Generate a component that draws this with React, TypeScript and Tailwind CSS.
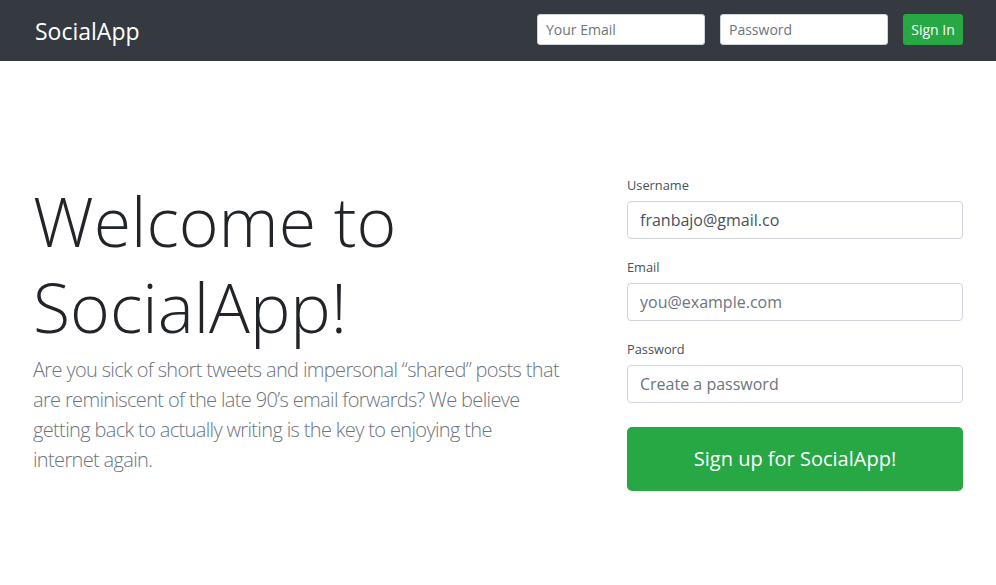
export default function App() {
  return (
    <div className="min-h-[585px] bg-white font-['Open_Sans',sans-serif] text-[#212529]">
      {/* Top navbar */}
      <header className="h-[61px] bg-[#343a40]">
        <div className="mx-auto flex h-full w-[930px] items-center justify-between">
          <a href="#" className="ml-[2px] text-[23px] leading-[30px] text-white">
            SocialApp
          </a>
          <form className="-mt-[2px] flex items-center gap-[15px]">
            <input
              type="text"
              placeholder="Your Email"
              className="h-[31px] w-[168px] rounded-[3px] border border-[#ced4da] bg-white px-2 text-[14px] text-[#495057] placeholder:text-[#6c757d]"
            />
            <input
              type="password"
              placeholder="Password"
              className="h-[31px] w-[168px] rounded-[3px] border border-[#ced4da] bg-white px-2 text-[14px] text-[#495057] placeholder:text-[#6c757d]"
            />
            <button className="h-[31px] w-[60px] rounded-[3px] bg-[#28a745] text-[14px] text-white">
              Sign In
            </button>
          </form>
        </div>
      </header>

      {/* Hero + sign up */}
      <main className="mx-auto flex w-[930px] items-start pt-[112px]">
        <div className="mt-[5px] w-[560px]">
          <h1 className="text-[68px] font-light leading-[86px]">
            Welcome to SocialApp!
          </h1>
          <p className="mt-[5px] text-[20px] font-light leading-[30px] tracking-[-0.65px] text-[#6c757d]">
            Are you sick of short tweets and impersonal “shared” posts that
            <br />
            are reminiscent of the late 90’s email forwards? We believe
            <br />
            getting back to actually writing is the key to enjoying the
            <br />
            internet again.
          </p>
        </div>

        <form className="ml-auto w-[336px]">
          <div className="mb-4">
            <label className="mb-[6px] block pt-[2px] text-[12.8px] leading-[20px] text-[#495057]">Username</label>
            <input
              type="text"
              defaultValue="franbajo@gmail.co"
              className="h-[38px] w-full rounded border border-[#ced4da] px-3 text-[16px] text-[#495057]"
            />
          </div>
          <div className="mb-4">
            <label className="mb-[6px] block pt-[2px] text-[12.8px] leading-[20px] text-[#495057]">Email</label>
            <input
              type="text"
              placeholder="you@example.com"
              className="h-[38px] w-full rounded border border-[#ced4da] px-3 text-[16px] text-[#495057] placeholder:text-[#6c757d]"
            />
          </div>
          <div className="mb-6">
            <label className="mb-[6px] block pt-[2px] text-[12.8px] leading-[20px] text-[#495057]">Password</label>
            <input
              type="password"
              placeholder="Create a password"
              className="h-[38px] w-full rounded border border-[#ced4da] px-3 text-[16px] text-[#495057] placeholder:text-[#6c757d]"
            />
          </div>
          <button className="h-[64px] w-full rounded-[5px] bg-[#28a745] text-[20px] text-white">
            Sign up for SocialApp!
          </button>
        </form>
      </main>
    </div>
  )
}
